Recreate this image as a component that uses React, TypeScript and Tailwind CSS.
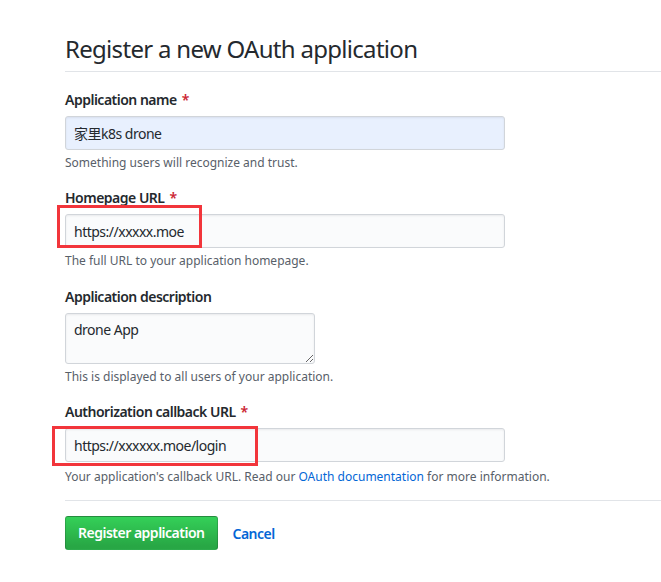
import type { ReactNode } from "react";

const font = "font-['Segoe_UI','Noto_Sans','Noto_Sans_CJK_SC',sans-serif]";

function Field({
  label,
  required,
  note,
  noteGap = "mt-[4px]",
  className = "",
  children,
}: {
  label: string;
  required?: boolean;
  note: ReactNode;
  noteGap?: string;
  className?: string;
  children: ReactNode;
}) {
  return (
    <div className={`flex flex-col ${className}`}>
      <label className="mb-[6px] text-[14px] leading-[21px] font-semibold tracking-[-0.5px] text-[#24292e]">
        {label}
        {required && <span className="ml-[5px] text-[#cb2431]">*</span>}
      </label>
      {children}
      <p className={`${noteGap} text-[12px] leading-[18px] text-[#586069]`}>{note}</p>
    </div>
  );
}

const inputCls =
  "h-[34px] w-[440px] rounded-[3px] border border-[#d1d5da] px-2 text-[14px] leading-[20px] tracking-[-0.5px] text-[#24292e] shadow-[inset_0_1px_2px_rgba(27,31,35,0.075)] outline-none";

export default function App() {
  return (
    <div className={`${font} min-h-[582px] bg-white pl-[65px] pt-[32px]`}>
      <div className="border-b border-[#e1e4e8] pb-[5px]">
        <h1 className="text-[24px] leading-[34px] font-normal tracking-[-0.7px] text-[#24292e]">
          Register a new OAuth application
        </h1>
      </div>

      <div className="mt-[17px] flex flex-col gap-[15px]">
        <Field label="Application name" required note="Something users will recognize and trust.">
          <input readOnly value="家里k8s drone" className={`${inputCls} bg-[#e8f0fe]`} />
        </Field>

        <Field label="Homepage URL" required note="The full URL to your application homepage.">
          <div className="relative w-[440px]">
            <input readOnly value="https://xxxxx.moe" className={`${inputCls} bg-[#fafbfc]`} />
            <div className="pointer-events-none absolute left-[-8px] top-[-9px] h-[43px] w-[145px] border-[3px] border-[#f2353b]" />
          </div>
        </Field>

        <Field
          label="Application description"
          className="mt-[1px]"
          note="This is displayed to all users of your application."
        >
          <textarea
            readOnly
            value="drone App"
            className="h-[51px] w-[250px] resize-y rounded-[3px] border border-[#d1d5da] bg-[#fafbfc] px-2 py-[6px] text-[14px] leading-[20px] tracking-[-0.5px] text-[#24292e] shadow-[inset_0_1px_2px_rgba(27,31,35,0.075)] outline-none"
          />
        </Field>

        <Field
          label="Authorization callback URL"
          required
          noteGap="mt-[6px]"
          note={
            <>
              Your application's callback URL. Read our{" "}
              <a href="#" className="text-[#0366d6]">
                OAuth documentation
              </a>{" "}
              for more information.
            </>
          }
        >
          <div className="relative w-[440px]">
            <input readOnly value="https://xxxxxx.moe/login" className={`${inputCls} bg-[#fafbfc]`} />
            <div className="pointer-events-none absolute left-[-13px] top-[-2px] h-[40px] w-[206px] border-[3px] border-[#f2353b]" />
          </div>
        </Field>
      </div>

      <div className="mt-[14px] border-t border-[#e1e4e8] pt-[15px]">
        <div className="flex items-center gap-[15px]">
          <button className="h-[34px] rounded-[3px] border border-[rgba(27,31,35,0.2)] bg-[linear-gradient(-180deg,#34d058_0%,#28a745_90%)] px-[12px] text-[14px] leading-[20px] font-semibold tracking-[-0.5px] text-white">
            Register application
          </button>
          <a href="#" className="text-[14px] font-semibold tracking-[-0.5px] text-[#0366d6]">
            Cancel
          </a>
        </div>
      </div>
    </div>
  );
}
